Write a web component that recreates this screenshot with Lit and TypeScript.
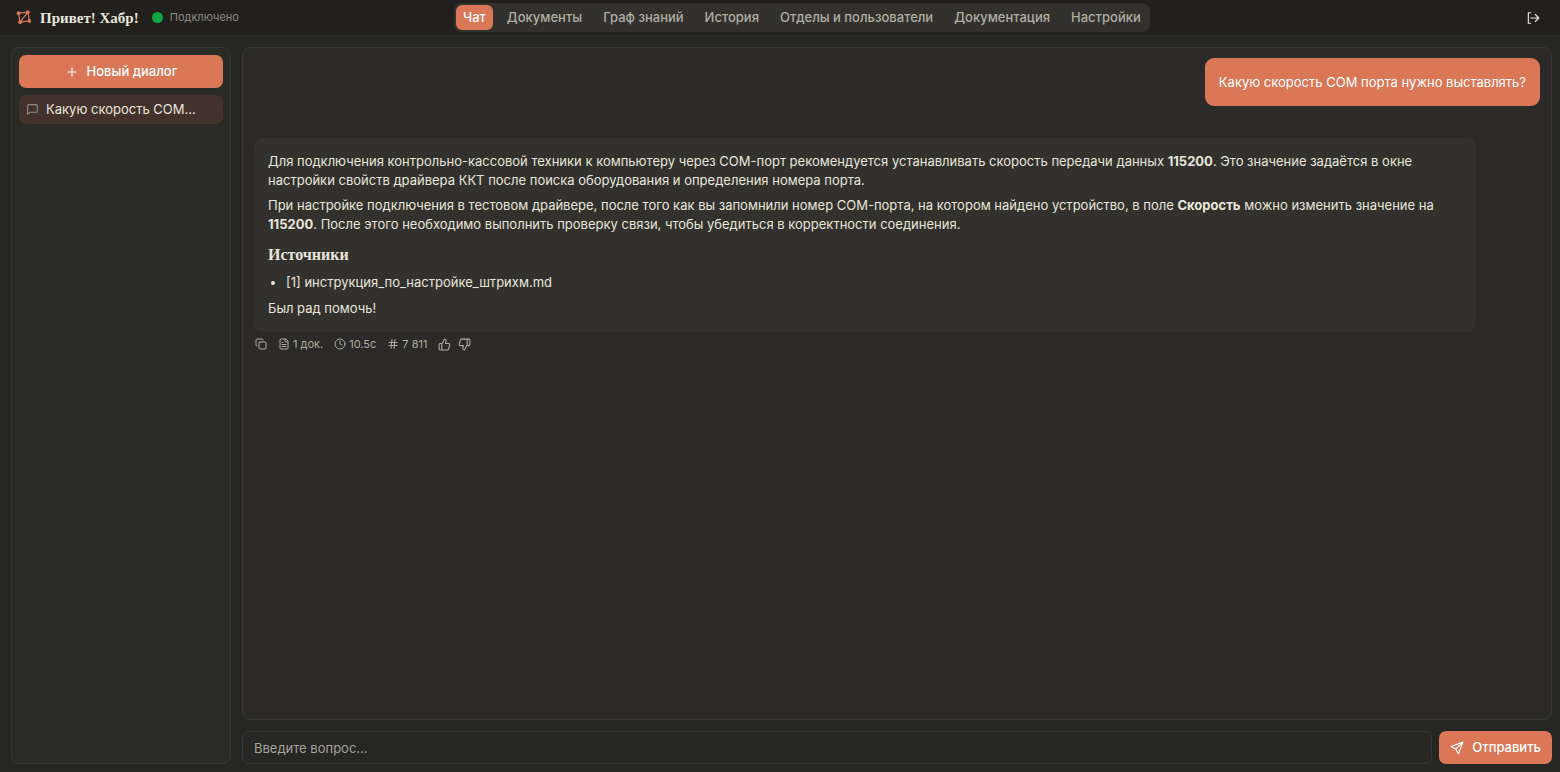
import { LitElement, html, css, svg } from "lit";
import { customElement, property, state } from "lit/decorators.js";
import { classMap } from "lit/directives/class-map.js";

const ICONS = {
  logo: svg`<path d="M4 5 19 3.500 21.500 17.500 6.500 19.500z M19 3.500 6.500 19.500" /><g fill="currentColor"><circle cx="4" cy="5" r="2"/><circle cx="19" cy="3.500" r="2"/><circle cx="21.500" cy="17.500" r="2"/><circle cx="6.500" cy="19.500" r="2"/></g>`,
  plus: svg`<path d="M5 12h14M12 5v14"/>`,
  message: svg`<path d="M21 15a2 2 0 0 1-2 2H7l-4 4V5a2 2 0 0 1 2-2h14a2 2 0 0 1 2 2z"/>`,
  logout: svg`<path d="M8 3H4v18h4M8 12h14M16 6l6 6-6 6"/>`,
  copy: svg`<rect width="14" height="14" x="8" y="8" rx="2"/><path d="M4 16c-1.100 0-2-.9-2-2V4c0-1.100.9-2 2-2h10c1.100 0 2 .9 2 2"/>`,
  file: svg`<path d="M15 2H6a2 2 0 0 0-2 2v16a2 2 0 0 0 2 2h12a2 2 0 0 0 2-2V7Z"/><path d="M14 2v4a2 2 0 0 0 2 2h4M10 9H8M16 13H8M16 17H8"/>`,
  clock: svg`<circle cx="12" cy="12" r="10"/><path d="M12 6v6l4 2"/>`,
  hash: svg`<path d="M4 9h16M4 15h16M10 3 8 21M16 3l-2 18"/>`,
  up: svg`<path d="M7 10v12M15 5.880 14 10h5.830a2 2 0 0 1 1.920 2.560l-2.330 8A2 2 0 0 1 17.500 22H4a2 2 0 0 1-2-2v-8a2 2 0 0 1 2-2h2.760a2 2 0 0 0 1.790-1.110L12 2a3.130 3.130 0 0 1 3 3.880Z"/>`,
  down: svg`<path d="M17 14V2M9 18.120 10 14H4.170a2 2 0 0 1-1.920-2.560l2.330-8A2 2 0 0 1 6.500 2H20a2 2 0 0 1 2 2v8a2 2 0 0 1-2 2h-2.760a2 2 0 0 0-1.790 1.110L12 22a3.130 3.130 0 0 1-3-3.880Z"/>`,
  send: svg`<path d="M22 2 2 9.500 10 14 14.500 22zM22 2 10 14"/>`,
};

type IconName = keyof typeof ICONS;

@customElement("ui-icon")
class UiIcon extends LitElement {
  static styles = css`
    :host { display: inline-flex; flex: none; width: 14px; height: 14px; }
    .glyph {
      width: 100%; height: 100%; fill: none; stroke: currentColor;
      stroke-width: 2; stroke-linecap: round; stroke-linejoin: round;
    }
  `;
  @property() name: IconName = "plus";
  render() {
    return html`<svg class="glyph" viewBox="0 0 24 24" aria-hidden="true">${ICONS[this.name]}</svg>`;
  }
}

@customElement("app-root")
class AppRoot extends LitElement {
  static styles = css`
    :host {
      display: flex; flex-direction: column; min-height: 100vh; box-sizing: border-box;
      background: #262624; color: #e8e6dc;
      font: 13px/19px Inter, "Noto Sans", sans-serif;
    }
    * { box-sizing: border-box; }
    button, input { font: inherit; color: inherit; margin: 0; }
    button { border: 0; background: none; padding: 0; cursor: pointer; }
    .top {
      display: grid; grid-template-columns: 10fr auto 9fr; align-items: center;
      height: 36px; padding: 0 16px; background: #21201c; border-bottom: 1px solid #2c2c29;
    }
    .brand { display: flex; align-items: center; gap: 9px; }
    .logo { color: #d97757; width: 15px; height: 15px; }
    .title { margin: 0; font: bold 15px/20px "Liberation Serif", serif; }
    .status { display: flex; align-items: center; gap: 7px; font-size: 11px; color: #8b8981; margin-left: 4px; }
    .dot { width: 11px; height: 11px; border-radius: 50%; background: #0da943; }
    .nav { display: flex; gap: 7px; padding: 2px; background: #32312d; border-radius: 8px; }
    .tab {
      padding: 3px 7px; border-radius: 6px; font-weight: 500;
      color: #b0aea2; text-decoration: none; white-space: nowrap;
    }
    .tab.active { background: #d97757; color: #fff; }
    .logout { justify-self: end; display: flex; padding: 4px; }
    .body {
      flex: 1; display: grid; grid-template-columns: 220px minmax(0, 1fr);
      gap: 11px; padding: 11px 8px 8px 11px;
    }
    .side {
      display: flex; flex-direction: column; gap: 7px; padding: 7px;
      background: #2a2a26; border: 1px solid #363632; border-radius: 8px;
    }
    .primary {
      display: flex; align-items: center; justify-content: center; gap: 8px; height: 33px;
      padding: 0 11px; border-radius: 7px; background: #d97757; color: #fff; font-weight: 500;
    }
    .dialog {
      display: flex; align-items: center; gap: 7px; height: 29px; padding: 0 7px;
      border-radius: 7px; background: #43322b; text-align: left;
    }
    .muted { color: #8f8880; width: 13px; height: 13px; }
    .main { display: flex; flex-direction: column; gap: 11px; }
    .chat {
      flex: 1; display: flex; flex-direction: column; padding: 10px 11px;
      background: #2b2a28; border: 1px solid #363632; border-radius: 8px;
    }
    .question {
      align-self: flex-end; margin: 0 0 32px; padding: 14px; border-radius: 9px;
      background: #d97757; color: #fff; line-height: 20px;
    }
    .answer {
      width: 95%; padding: 14px; border-radius: 9px; background: #32312d;
    }
    .text { margin: 0 0 6px; }
    .text:last-child { margin: 0; }
    .sources { margin: 12px 0 9px; font: bold 16px/18px "Liberation Serif", serif; }
    .list { margin: 0 0 7px; padding-left: 18px; }
    .meta { display: flex; align-items: center; gap: 11px; margin-top: 4px; padding-left: 1px; font-size: 11px; color: #aeaca1; line-height: 16px; }
    .item { display: flex; align-items: center; gap: 3px; }
    .small { width: 12px; height: 12px; }
    .votes { display: flex; gap: 7px; }
    .vote { display: flex; }
    .thumb { width: 13px; height: 13px; }
    .composer { display: flex; gap: 7px; }
    .field {
      flex: 1; min-width: 0; height: 33px; padding: 0 11px; background: #262624;
      border: 1px solid #363632; border-radius: 7px; outline: none;
    }
    .field::placeholder { color: #a5a39a; opacity: 1; }
  `;

  @state() private active = "Чат";

  private tabs = ["Чат", "Документы", "Граф знаний", "История", "Отделы и пользователи", "Документация", "Настройки"];

  private select(event: Event, tab: string) {
    event.preventDefault();
    this.active = tab;
  }

  render() {
    return html`
      <header class="top">
        <div class="brand">
          <ui-icon class="logo" name="logo"></ui-icon>
          <h1 class="title">Привет! Хабр!</h1>
          <span class="status"><span class="dot"></span>Подключено</span>
        </div>
        <nav class="nav">
          ${this.tabs.map((tab) => html`<a href="#" class=${classMap({ tab: true, active: tab === this.active })}
            @click=${(e: Event) => this.select(e, tab)}>${tab}</a>`)}
        </nav>
        <button class="logout" aria-label="Выйти"><ui-icon name="logout"></ui-icon></button>
      </header>
      <div class="body">
        <aside class="side">
          <button class="primary"><ui-icon name="plus"></ui-icon>Новый диалог</button>
          <button class="dialog"><ui-icon class="muted" name="message"></ui-icon>Какую скорость COM...</button>
        </aside>
        <main class="main">
          <section class="chat">
            <p class="question">Какую скорость COM порта нужно выставлять?</p>
            <article class="answer">
              <p class="text">Для подключения контрольно-кассовой техники к компьютеру через COM-порт рекомендуется устанавливать скорость передачи данных <strong>115200</strong>. Это значение задаётся в окне настройки свойств драйвера ККТ после поиска оборудования и определения номера порта.</p>
              <p class="text">При настройке подключения в тестовом драйвере, после того как вы запомнили номер COM-порта, на котором найдено устройство, в поле <strong>Скорость</strong> можно изменить значение на <strong>115200</strong>. После этого необходимо выполнить проверку связи, чтобы убедиться в корректности соединения.</p>
              <h2 class="sources">Источники</h2>
              <ul class="list"><li>[1] инструкция_по_настройке_штрихм.md</li></ul>
              <p class="text">Был рад помочь!</p>
            </article>
            <div class="meta">
              <button class="vote" aria-label="Копировать"><ui-icon class="small" name="copy"></ui-icon></button>
              <span class="item"><ui-icon class="small" name="file"></ui-icon>1 док.</span>
              <span class="item"><ui-icon class="small" name="clock"></ui-icon>10.5с</span>
              <span class="item"><ui-icon class="small" name="hash"></ui-icon>7 811</span>
              <span class="votes">
                <button class="vote" aria-label="Полезно"><ui-icon class="thumb" name="up"></ui-icon></button>
                <button class="vote" aria-label="Не полезно"><ui-icon class="thumb" name="down"></ui-icon></button>
              </span>
            </div>
          </section>
          <form class="composer" @submit=${(e: Event) => e.preventDefault()}>
            <input class="field" type="text" aria-label="Вопрос" placeholder="Введите вопрос..." />
            <button class="primary" type="submit"><ui-icon name="send"></ui-icon>Отправить</button>
          </form>
        </main>
      </div>
    `;
  }
}
